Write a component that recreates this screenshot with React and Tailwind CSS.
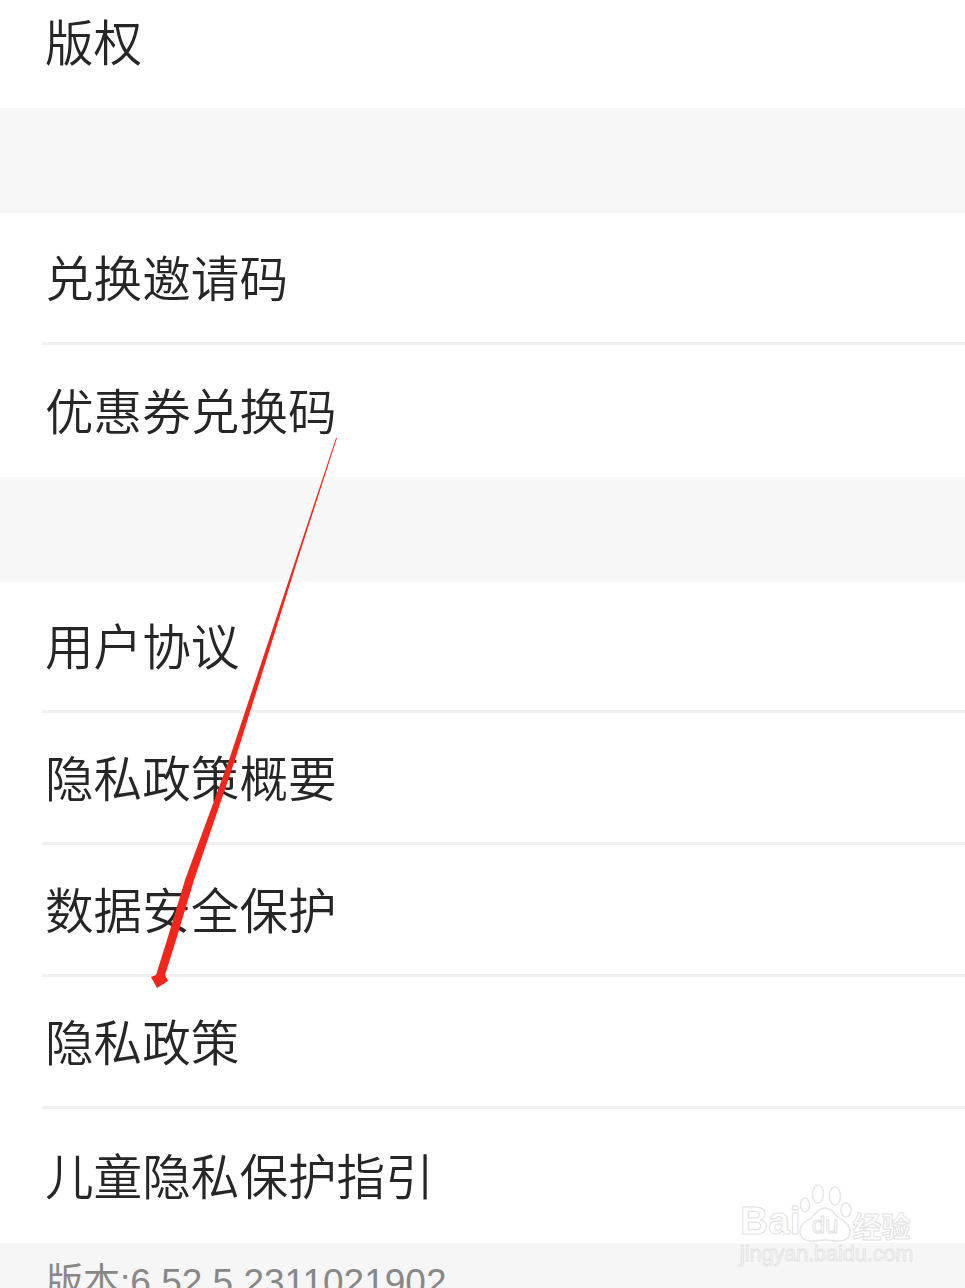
const font = { fontFamily: '"Noto Sans CJK SC", "Liberation Sans", sans-serif' };
const latin = { fontFamily: '"Liberation Sans", "Noto Sans CJK SC", sans-serif' };

function Row({ label, divider, className = "h-[130px]" }) {
  return (
    <div className={`flex flex-col bg-white ${className}`}>
      <div className="flex flex-1 items-center pl-[45px] pb-[3px] text-[48.6px] font-[350] leading-none text-[#262626]">{label}</div>
      {divider && <div className="ml-[42px] h-[3px] shrink-0 bg-[#f0f0f0]" />}
    </div>
  );
}

const Gap = () => <div className="h-[105px] bg-[#f7f7f7]" />;

function Watermark() {
  return (
    <div className="absolute left-[740px] top-[1183px] flex w-[176px] flex-col select-none">
      <svg className="absolute left-[58px] top-0" width="56" height="60" viewBox="0 0 56 60" fill="none" stroke="#e6e6e6" strokeWidth="1.5">
        <ellipse cx="7" cy="22" rx="4.5" ry="7" />
        <ellipse cx="20" cy="11" rx="5.5" ry="9" />
        <ellipse cx="37" cy="13" rx="5.5" ry="9" />
        <ellipse cx="48" cy="27" rx="5" ry="7" />
        <path d="M27 25c-6 0-9 5-13 9-5 4-12 7-12 14 0 7 5 10 12 10 5 0 8-1 13-1s8 1 13 1c7 0 12-3 12-10 0-7-7-10-12-14-4-4-7-9-13-9z" />
      </svg>
      <div className="flex h-[58px] items-end pb-[1px] text-transparent [-webkit-text-stroke:1px_#e2e2e2]">
        <span className="text-[39px] font-bold leading-none" style={latin}>Bai</span>
        <span className="ml-[11px] mb-[3px] text-[24px] leading-none" style={latin}>du</span>
        <span className="ml-[14px] text-[29px] font-bold leading-none" style={font}>经验</span>
      </div>
      <span className="mt-[3px] text-[21.5px] leading-none text-transparent [-webkit-text-stroke:0.8px_#e2e2e2]" style={latin}>jingyan.baidu.com</span>
    </div>
  );
}

export default function App() {
  return (
    <div className="relative h-[1288px] w-[965px] overflow-hidden bg-white" style={font}>
      <Row label="版权" className="h-[108px] pb-[24px]" />
      <Gap />
      <Row label="兑换邀请码" divider className="h-[132px]" />
      <Row label="优惠券兑换码" className="h-[132px]" />
      <Gap />
      <Row label="用户协议" divider className="h-[131px]" />
      <Row label="隐私政策概要" divider className="h-[132px]" />
      <Row label="数据安全保护" divider className="h-[132px]" />
      <Row label="隐私政策" divider className="h-[132px]" />
      <Row label="儿童隐私保护指引" className="h-[134px]" />
      <div className="h-[46px] overflow-hidden bg-[#f6f6f6] pl-[46px] pt-[18px] text-[37px] font-normal leading-[44px] text-[#888888]" style={latin}>版本:6.52.5.2311021902</div>
      <svg className="absolute inset-0" width="965" height="1288" viewBox="0 0 965 1288" fill="#f3261c">
        <polygon points="337,438 297.5,560 235,760 194,880 176,940 165,975 168,981 157,988 151,977 156,975 167,940 185,880 229,760 295.5,560 336,438" />
      </svg>
      <Watermark />
    </div>
  );
}
